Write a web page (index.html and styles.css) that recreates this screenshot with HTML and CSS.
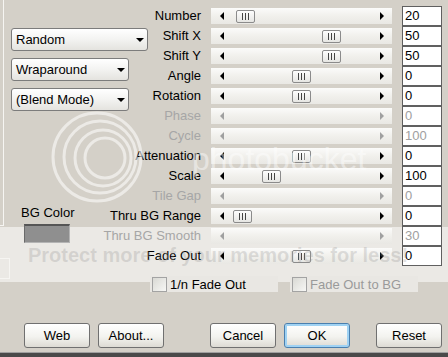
FILE: index.html
```html
<!DOCTYPE html>
<html lang="en">
<head>
  <meta charset="UTF-8">
  <meta name="viewport" content="width=device-width, initial-scale=1.0">
  <title>Tile Settings</title>
  <link rel="stylesheet" href="styles.css">
</head>
<body>
  <div class="dialog">
    <div class="main">
      <!-- Left column: mode pickers and background colour -->
      <div class="side">
        <div class="edge">
          <div class="edge-frame"></div>
          <div class="edge-stub"></div>
        </div>
        <div class="side-body">
          <div class="dropdown wide">Random<span class="caret"></span></div>
          <div class="dropdown">Wraparound<span class="caret"></span></div>
          <div class="dropdown">(Blend Mode)<span class="caret"></span></div>
          <div class="bg-label">BG Color</div>
          <div class="swatch"></div>
        </div>
      </div>

      <!-- Slider rows -->
      <div class="controls">
        <div class="name">Number</div>
        <div class="track"><span class="arrow-l"></span><span class="lane"><span class="thumb" style="margin-left:4px"></span></span><span class="arrow-r"></span></div>
        <div class="value">20</div>

        <div class="name">Shift X</div>
        <div class="track"><span class="arrow-l"></span><span class="lane"><span class="thumb" style="margin-left:90px"></span></span><span class="arrow-r"></span></div>
        <div class="value">50</div>

        <div class="name">Shift Y</div>
        <div class="track"><span class="arrow-l"></span><span class="lane"><span class="thumb" style="margin-left:90px"></span></span><span class="arrow-r"></span></div>
        <div class="value">50</div>

        <div class="name">Angle</div>
        <div class="track"><span class="arrow-l"></span><span class="lane"><span class="thumb" style="margin-left:60px"></span></span><span class="arrow-r"></span></div>
        <div class="value">0</div>

        <div class="name">Rotation</div>
        <div class="track"><span class="arrow-l"></span><span class="lane"><span class="thumb" style="margin-left:60px"></span></span><span class="arrow-r"></span></div>
        <div class="value">0</div>

        <div class="name off">Phase</div>
        <div class="track off"><span class="arrow-l"></span><span class="lane"></span><span class="arrow-r"></span></div>
        <div class="value off">0</div>

        <div class="name off">Cycle</div>
        <div class="track off"><span class="arrow-l"></span><span class="lane"></span><span class="arrow-r"></span></div>
        <div class="value off">100</div>

        <div class="name">Attenuation</div>
        <div class="track"><span class="arrow-l"></span><span class="lane"><span class="thumb" style="margin-left:60px"></span></span><span class="arrow-r"></span></div>
        <div class="value">0</div>

        <div class="name">Scale</div>
        <div class="track"><span class="arrow-l"></span><span class="lane"><span class="thumb" style="margin-left:30px"></span></span><span class="arrow-r"></span></div>
        <div class="value">100</div>

        <div class="name off">Tile Gap</div>
        <div class="track off"><span class="arrow-l"></span><span class="lane"></span><span class="arrow-r"></span></div>
        <div class="value off">0</div>

        <div class="name">Thru BG Range</div>
        <div class="track"><span class="arrow-l"></span><span class="lane"><span class="thumb" style="margin-left:1px"></span></span><span class="arrow-r"></span></div>
        <div class="value">0</div>

        <div class="name off">Thru BG Smooth</div>
        <div class="track off"><span class="arrow-l"></span><span class="lane"></span><span class="arrow-r"></span></div>
        <div class="value off">30</div>

        <div class="name">Fade Out</div>
        <div class="track"><span class="arrow-l"></span><span class="lane"><span class="thumb" style="margin-left:60px"></span></span><span class="arrow-r"></span></div>
        <div class="value">0</div>
      </div>
    </div>

    <!-- Options -->
    <div class="checks">
      <div class="check"><span class="box"></span>1/n Fade Out</div>
      <div class="check off"><span class="box"></span>Fade Out to BG</div>
    </div>

    <!-- Buttons -->
    <div class="footer">
      <button class="btn">Web</button>
      <button class="btn">About...</button>
      <button class="btn cancel">Cancel</button>
      <button class="btn ok">OK</button>
      <button class="btn reset">Reset</button>
    </div>
    <div class="base"></div>
  </div>

  <!-- Host watermark laid over the screenshot -->
  <div class="watermark">
    <svg class="rings" width="120" height="120" viewBox="0 0 120 120">
      <circle cx="57" cy="57" r="44" fill="none" stroke="rgba(255,255,255,0.55)" stroke-width="3"/>
      <circle cx="60" cy="57" r="36" fill="none" stroke="rgba(255,255,255,0.55)" stroke-width="3"/>
      <circle cx="63" cy="58" r="28" fill="none" stroke="rgba(255,255,255,0.55)" stroke-width="3"/>
      <circle cx="65" cy="58" r="20" fill="none" stroke="rgba(255,255,255,0.55)" stroke-width="3"/>
    </svg>
    <span class="wm-brand">photobucket</span>
    <span class="wm-note">Protect more of your memories for less!</span>
  </div>
</body>
</html>
```

FILE: styles.css
```css
body {
  margin: 0;
  width: 448px;
  height: 357px;
  overflow: hidden;
  position: relative;
  font-family: "Liberation Sans", Arial, sans-serif;
  font-size: 13px;
  color: #000;
  background: linear-gradient(to bottom, #d4d0c8 227px, #ebe9e5 227px, #ebe9e5 282px, #d4d0c8 282px);
}
.dialog {
  display: flex;
  flex-direction: column;
  height: 357px;
}
.main {
  display: grid;
  grid-template-rows: 266px;
}
.side,
.controls {
  grid-area: 1 / 1;
}
.side {
  display: flex;
  align-items: flex-start;
}
.edge {
  width: 11px;
  flex: none;
  display: flex;
  flex-direction: column;
}
.edge-frame {
  width: 3px;
  height: 225px;
  border-right: 1px solid #f6f5f2;
  border-bottom: 1px solid #f6f5f2;
}
.edge-stub {
  width: 9px;
  height: 19px;
  margin-top: 32px;
  border: 1px solid #f6f5f2;
  border-left: none;
}
.side-body {
  display: flex;
  flex-direction: column;
  align-items: flex-start;
  padding-top: 28px;
}
.dropdown {
  box-sizing: border-box;
  width: 118px;
  height: 23px;
  padding: 0 3px 0 4px;
  border: 1px solid #7c7c7c;
  border-radius: 3px;
  background: linear-gradient(#ffffff, #f3f3f1 50%, #e4e3df);
  display: flex;
  align-items: center;
  justify-content: space-between;
}
.dropdown + .dropdown {
  margin-top: 7px;
}
.dropdown.wide {
  width: 137px;
}
.caret {
  width: 0;
  height: 0;
  border-left: 4px solid transparent;
  border-right: 4px solid transparent;
  border-top: 4px solid #000;
}
.bg-label {
  margin: 94px 0 0 10px;
  line-height: 16px;
}
.swatch {
  width: 44px;
  height: 16px;
  margin: 3px 0 0 13px;
  background: #8f8f8f;
  border-top: 2px solid #555;
  border-left: 1px solid #6a6a6a;
  border-right: 1px solid #b4b4b4;
  border-bottom: 1px solid #b4b4b4;
}

/* slider grid */
.controls {
  display: grid;
  grid-template-columns: 201px 181px 40px;
  grid-auto-rows: 20px;
  column-gap: 10px;
  align-content: start;
  padding-top: 6px;
}
.name {
  justify-self: end;
  align-self: center;
  white-space: nowrap;
  line-height: 16px;
}
.name.off {
  color: #a6a6a6;
}
.track {
  align-self: center;
  height: 16px;
  display: flex;
  align-items: center;
  background: linear-gradient(#fbfbfa, #f1f0ec 50%, #e9e8e4);
}
.arrow-l,
.arrow-r {
  width: 21px;
  flex: none;
  display: flex;
  justify-content: center;
}
.arrow-l::before {
  content: "";
  border-right: 4px solid #000;
  border-top: 4px solid transparent;
  border-bottom: 4px solid transparent;
}
.arrow-r::before {
  content: "";
  border-left: 4px solid #000;
  border-top: 4px solid transparent;
  border-bottom: 4px solid transparent;
}
.track.off .arrow-l::before {
  border-right-color: #a0a0a0;
}
.track.off .arrow-r::before {
  border-left-color: #a0a0a0;
}
.lane {
  flex: 1;
  display: flex;
  align-items: center;
}
.thumb {
  box-sizing: border-box;
  width: 19px;
  height: 13px;
  border: 1px solid #8b8b8b;
  border-radius: 2px;
  background:
    linear-gradient(#444, #444) 5px 2px / 1px 7px no-repeat,
    linear-gradient(#444, #444) 8px 2px / 1px 7px no-repeat,
    linear-gradient(#444, #444) 11px 2px / 1px 7px no-repeat,
    linear-gradient(#fdfdfd, #e6e6e3);
}
.value {
  box-sizing: border-box;
  height: 20px;
  padding-left: 2px;
  line-height: 18px;
  background: #fff;
  border: 1px solid #606060;
}
.value.off {
  color: #a0a0a0;
}

/* check boxes */
.checks {
  display: flex;
  gap: 12px;
  margin: 10px 0 0 150px;
}
.check {
  box-sizing: border-box;
  width: 128px;
  height: 16px;
  padding-left: 2px;
  display: flex;
  align-items: center;
  gap: 3px;
  background: #e9e7e3;
}
.check.off {
  color: #9a9a9a;
}
.box {
  box-sizing: border-box;
  width: 15px;
  height: 15px;
  border: 1px solid #a3a3a3;
  background: linear-gradient(135deg, #d9d9d4, #f7f7f5);
}

/* buttons */
.footer {
  display: flex;
  gap: 8px;
  margin-top: 31px;
  padding-left: 24px;
}
.btn {
  box-sizing: border-box;
  width: 66px;
  height: 25px;
  padding: 0;
  border: 1px solid #707070;
  border-radius: 3px;
  background: linear-gradient(#ffffff, #f3f3ef 55%, #dddbd4);
  font-family: "Liberation Sans", Arial, sans-serif;
  font-size: 13px;
  color: #000;
}
.btn.cancel {
  margin-left: 38px;
}
.btn.ok {
  border-color: #4a7fae;
  box-shadow: inset 0 0 0 2px #9fd2f3;
}
.btn.reset {
  margin-left: 18px;
}
.base {
  margin-top: auto;
  height: 4px;
  border-top: 1px solid #a0a0a0;
  background: #4a4a4a;
}

/* watermark */
.watermark {
  position: absolute;
  inset: 0;
  pointer-events: none;
  overflow: hidden;
}
.rings {
  position: absolute;
  left: 40px;
  top: 100px;
}
.wm-brand {
  position: absolute;
  left: 192px;
  top: 143px;
  font-size: 32px;
  line-height: 1;
  color: rgba(255, 255, 255, 0.45);
}
.wm-note {
  position: absolute;
  left: 28px;
  top: 245px;
  font-size: 20px;
  font-weight: bold;
  line-height: 1;
  white-space: nowrap;
  color: rgba(150, 150, 150, 0.28);
}
```
